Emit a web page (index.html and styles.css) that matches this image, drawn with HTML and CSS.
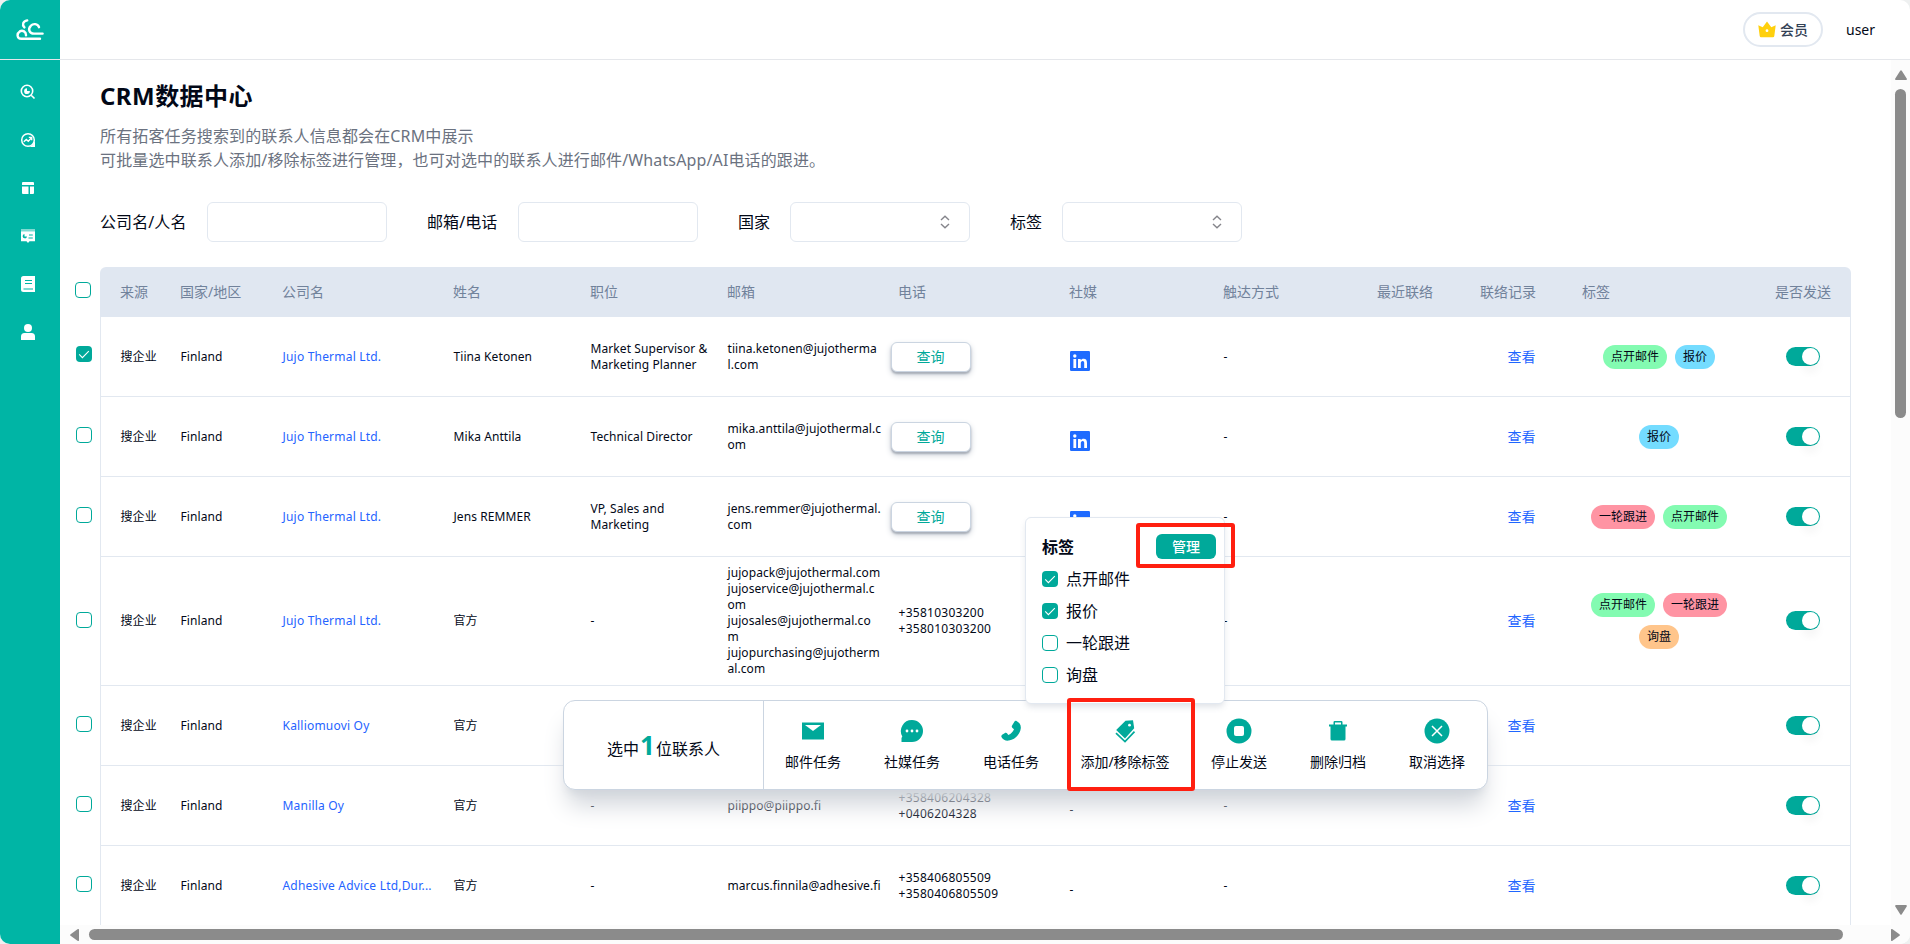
FILE: index.html
```html
<!DOCTYPE html>
<html lang="zh-CN">
<head>
<meta charset="utf-8">
<title>CRM数据中心</title>
<link rel="stylesheet" href="styles.css">
</head>
<body>
<svg class="sprite" aria-hidden="true">
  <symbol id="linkedin" viewBox="0 0 20 20"><rect width="20" height="20" rx="1.2" fill="#1f6bff"/><circle cx="4.8" cy="5" r="1.7" fill="#fff"/><path d="M3.4 8h2.8v9H3.4zM8 8h2.7v1.2c.6-.9 1.6-1.5 2.9-1.5 2.5 0 3.4 1.6 3.4 4.2V17h-2.800v-4.6c0-1.4-.3-2.3-1.5-2.3-1.3 0-1.9.9-1.9 2.3V17H8z" fill="#fff"/></symbol>
  <symbol id="updown" viewBox="0 0 12 14"><path d="M2 5l4-3.8L10 5M2 9l4 3.800L10 9" fill="none" stroke="#85858b" stroke-width="1.4"/></symbol>
  <symbol id="tick" viewBox="0 0 16 16"><path d="M3.2 8.4l3.2 3.2 6.4-6.4" fill="none" stroke="#fff" stroke-width="1.1"/></symbol>
</svg>
<div class="app">
  <aside class="sidebar">
    <div class="logo"><svg width="28" height="22" viewBox="0 0 28 22" fill="none" stroke="#fff" stroke-width="2.4" stroke-linecap="round"><path d="M11.200 1.400C7 2 5.800 5.600 8.400 8.400"/><path d="M23 8.200C21.800 4.600 17.200 4.200 14.800 6.800 11.400 10.200 13.600 14.600 18 14.600H26.600"/><path d="M10 16.400C10.200 12.600 6.600 10.800 3.800 12.400 .4 14.600 1 19.800 5.200 19.800H24"/></svg></div>
    <nav class="menu">
      <a class="menu-item"><svg width="16" height="16" viewBox="0 0 16 16" fill="none" stroke="#fff" stroke-width="1.6"><circle cx="7" cy="7" r="5.700"/><path d="M11.200 11.200l3.300 3.300"/><path d="M7 4.500v2.500h2.900A2.900 2.900 0 1 1 7 4.200z" fill="#fff" stroke="none"/></svg></a>
      <a class="menu-item"><svg width="16" height="16" viewBox="0 0 16 16" fill="none" stroke="#fff" stroke-width="1.500"><circle cx="8" cy="8" r="6.300"/><path d="M15 8v7H8c4 0 6-3 7-7z" fill="#fff" stroke="none"/><path d="M3.800 9.800l2.500-2.300 2 1.800 3-3.200M8.800 5.400h2.900v2.900" stroke-width="1.400"/></svg></a>
      <a class="menu-item"><svg width="16" height="16" viewBox="0 0 16 16" fill="#fff"><path d="M3 2h10a1 1 0 0 1 1 1v2H2V3a1 1 0 0 1 1-1zM2 6.500h6.500V14H3a1 1 0 0 1-1-1zM10 6.500h4V13a1 1 0 0 1-1 1h-3z"/></svg></a>
      <a class="menu-item"><svg width="16" height="16" viewBox="0 0 16 16"><path d="M1 1.500h14v1H1zM1 3.300h14v10H9.500L8 15l-1.500-1.700H1z" fill="#fff"/><path d="M4.500 6a2.200 2.200 0 1 0 2.500 2.500H4.500z" fill="#00b5a5"/><path d="M9 7h3.800M8.500 10h4.300" fill="none" stroke="#00b5a5" stroke-width="1"/></svg></a>
      <a class="menu-item"><svg width="16" height="18" viewBox="0 0 16 18"><path d="M3.500 1H15v16H3.500A2.500 2.500 0 0 1 1 14.500v-11A2.500 2.500 0 0 1 3.500 1z" fill="#fff"/><path d="M5 5.500h7M5 8.500h7M3.500 14h9.500" stroke="#00b5a5" stroke-width="1.200"/></svg></a>
      <a class="menu-item"><svg width="16" height="18" viewBox="0 0 16 18" fill="#fff"><circle cx="8" cy="5" r="4"/><path d="M1 17v-3.500A3.500 3.500 0 0 1 4.500 10h7a3.500 3.500 0 0 1 3.500 3.500V17z"/></svg></a>
    </nav>
  </aside>
  <div class="body">
    <header class="topbar">
      <div class="vip"><svg width="18" height="17" viewBox="0 0 18 17"><path d="M.3 4.300l4.400 2L9 .4l4.300 5.900 4.400-2L16.300 15a1.400 1.400 0 0 1-1.400 1.300H3.100A1.400 1.400 0 0 1 1.700 15z" fill="#ffd00d"/><circle cx="9" cy="9.700" r="1.400" fill="#fff"/></svg><span>会员</span></div>
      <span class="user">user</span>
    </header>
    <div class="scroller">
      <main class="content">
        <div class="intro">
          <h1>CRM数据中心</h1>
          <p>所有拓客任务搜索到的联系人信息都会在CRM中展示</p>
          <p>可批量选中联系人添加/移除标签进行管理，也可对选中的联系人进行邮件/WhatsApp/AI电话的跟进。</p>
        </div>
        <form class="filters">
          <label class="filter"><span class="w-87">公司名/人名</span><i class="input"></i></label>
          <label class="filter"><span class="w-71">邮箱/电话</span><i class="input"></i></label>
          <label class="filter"><span>国家</span><i class="input"><svg width="12" height="14"><use href="#updown"/></svg></i></label>
          <label class="filter"><span>标签</span><i class="input"><svg width="12" height="14"><use href="#updown"/></svg></i></label>
        </form>
        <div class="line">
          <div class="gutter gutter-head"><i class="check"></i></div>
          <div class="cols head"><div>来源</div><div>国家/地区</div><div>公司名</div><div>姓名</div><div>职位</div><div>邮箱</div><div>电话</div><div>社媒</div><div>触达方式</div><div>最近联络</div><div>联络记录</div><div>标签</div><div>是否发送</div></div>
        </div>
        <div class="line">
          <div class="gutter raised"><i class="check on"><svg width="16" height="16"><use href="#tick"/></svg></i></div>
          <div class="cols row"><div>搜企业</div><div>Finland</div><div class="link">Jujo Thermal Ltd.</div><div>Tiina Ketonen</div><div>Market Supervisor &amp;<br>Marketing Planner</div><div class="mail">tiina.ketonen@jujotherma<br>l.com</div><div><button class="query">查询</button></div><div><svg class="in" width="20" height="20"><use href="#linkedin"/></svg></div><div>-</div><div></div><div class="view">查看</div><div class="tags"><span class="tag green">点开邮件</span><span class="tag blue">报价</span></div><div><i class="switch"></i></div></div>
        </div>
        <div class="line">
          <div class="gutter"><i class="check"></i></div>
          <div class="cols row"><div>搜企业</div><div>Finland</div><div class="link">Jujo Thermal Ltd.</div><div>Mika Anttila</div><div>Technical Director</div><div class="mail">mika.anttila@jujothermal.c<br>om</div><div><button class="query">查询</button></div><div><svg class="in" width="20" height="20"><use href="#linkedin"/></svg></div><div>-</div><div></div><div class="view">查看</div><div class="tags"><span class="tag blue">报价</span></div><div><i class="switch"></i></div></div>
        </div>
        <div class="line">
          <div class="gutter"><i class="check"></i></div>
          <div class="cols row"><div>搜企业</div><div>Finland</div><div class="link">Jujo Thermal Ltd.</div><div>Jens REMMER</div><div>VP, Sales and<br>Marketing</div><div class="mail">jens.remmer@jujothermal.<br>com</div><div><button class="query">查询</button></div><div><svg class="in" width="20" height="20"><use href="#linkedin"/></svg></div><div>-</div><div></div><div class="view">查看</div><div class="tags"><span class="tag red">一轮跟进</span><span class="tag green">点开邮件</span></div><div><i class="switch"></i></div></div>
        </div>
        <div class="line">
          <div class="gutter"><i class="check"></i></div>
          <div class="cols row tall"><div>搜企业</div><div>Finland</div><div class="link">Jujo Thermal Ltd.</div><div>官方</div><div>-</div><div class="mail">jujopack@jujothermal.com<br>jujoservice@jujothermal.c<br>om<br>jujosales@jujothermal.co<br>m<br>jujopurchasing@jujotherm<br>al.com</div><div class="phone">+35810303200<br>+358010303200</div><div></div><div>-</div><div></div><div class="view">查看</div><div class="tags"><span class="tag green">点开邮件</span><span class="tag red">一轮跟进</span><span class="tag orange">询盘</span></div><div><i class="switch"></i></div></div>
        </div>
        <div class="line">
          <div class="gutter"><i class="check"></i></div>
          <div class="cols row"><div>搜企业</div><div>Finland</div><div class="link">Kalliomuovi Oy</div><div>官方</div><div></div><div></div><div></div><div></div><div></div><div></div><div class="view">查看</div><div></div><div><i class="switch"></i></div></div>
        </div>
        <div class="line">
          <div class="gutter"><i class="check"></i></div>
          <div class="cols row"><div>搜企业</div><div>Finland</div><div class="link">Manilla Oy</div><div>官方</div><div>-</div><div class="mail">piippo@piippo.fi</div><div class="phone">+358406204328<br>+0406204328</div><div class="low">-</div><div>-</div><div></div><div class="view">查看</div><div></div><div><i class="switch"></i></div></div>
        </div>
        <div class="line">
          <div class="gutter"><i class="check"></i></div>
          <div class="cols row"><div>搜企业</div><div>Finland</div><div class="link">Adhesive Advice Ltd,Dur...</div><div>官方</div><div>-</div><div class="mail">marcus.finnila@adhesive.fi</div><div class="phone">+358406805509<br>+3580406805509</div><div class="low">-</div><div>-</div><div></div><div class="view">查看</div><div></div><div><i class="switch"></i></div></div>
        </div>
      </main>
      <div class="vbar"><svg width="12" height="10" viewBox="0 0 12 10"><path d="M5.200.7a1 1 0 0 1 1.600 0l4.900 7.700a1 1 0 0 1-.8 1.600H1.100a1 1 0 0 1-.8-1.600z"/></svg><i class="vthumb"></i><svg class="down" width="12" height="10" viewBox="0 0 12 10"><path d="M5.200 9.300a1 1 0 0 0 1.600 0l4.900-7.700A1 1 0 0 0 10.900 0H1.100a1 1 0 0 0-.8 1.600z"/></svg></div>
      <div class="hbar"><svg width="9" height="12" viewBox="0 0 9 12"><path d="M.6 5.200a1 1 0 0 0 0 1.600l6.900 5A1 1 0 0 0 9 11V1A1 1 0 0 0 7.500.2z"/></svg><i class="hthumb"></i><svg class="right" width="9" height="12" viewBox="0 0 9 12"><path d="M8.400 5.200a1 1 0 0 1 0 1.600l-6.900 5A1 1 0 0 1 0 11V1A1 1 0 0 1 1.500.2z"/></svg></div>
    </div>
  </div>

  <section class="actions">
    <div class="picked">选中<b>1</b>位联系人</div>
    <div class="action"><svg width="26" height="26" viewBox="0 0 26 26"><path d="M2 4.500h22v17H2z"/><path d="M5 7h16l-8 6z" fill="#fff"/></svg><span>邮件任务</span></div>
    <div class="action"><svg width="26" height="26" viewBox="0 0 26 26"><path d="M13 2a11 11 0 1 1 0 22H2.500V20l.8-1.600A11 11 0 0 1 13 2z"/><circle cx="8" cy="13" r="1.400" fill="#fff"/><circle cx="13" cy="13" r="1.400" fill="#fff"/><circle cx="18" cy="13" r="1.400" fill="#fff"/></svg><span>社媒任务</span></div>
    <div class="action"><svg width="26" height="26" viewBox="0 0 26 26"><path d="M18.500 3c2.800 1.400 4.600 3.800 4.300 7.200-.6 5.800-5.600 11.300-11.900 12.400-3.200.5-5.800-.8-7.300-3.400-.5-.9-.3-1.800.5-2.400l2.500-1.600c1-.7 2.200-.4 2.800.5l.9 1.300c2.900-1.200 4.700-3.200 5.700-5.700l-1.500-1.200c-.8-.7-1-1.800-.4-2.700L16.200 4c.6-1 1.400-1.400 2.300-1z"/></svg><span>电话任务</span></div>
    <div class="action wide"><svg width="26" height="26" viewBox="0 0 26 26"><path d="M13.500 2.800 21 2.200l1.200 8-9.200 10.300-8.800-8.600z"/><circle cx="17.500" cy="7.200" r="1.400" fill="#fff"/><path d="M4 15.200l9 8.400 9.500-10" fill="none" stroke="#00a99a" stroke-width="1.700"/></svg><span>添加/移除标签</span></div>
    <div class="action"><svg width="26" height="26" viewBox="0 0 26 26"><circle cx="13" cy="13" r="12.500"/><rect x="8" y="8" width="10" height="10" rx="2" fill="#fff"/></svg><span>停止发送</span></div>
    <div class="action"><svg width="26" height="26" viewBox="0 0 26 26"><path d="M4 6.500h4.500V4.200A1.200 1.200 0 0 1 9.700 3h6.600a1.200 1.200 0 0 1 1.200 1.200v2.300H22v2h-1.500V21a1.500 1.500 0 0 1-1.500 1.500H7A1.500 1.500 0 0 1 5.500 21V8.500H4zM10 4.600v1.900h6V4.600z" fill-rule="evenodd"/></svg><span>删除归档</span></div>
    <div class="action"><svg width="26" height="26" viewBox="0 0 26 26"><circle cx="13" cy="13" r="12.500"/><path d="M8 8l10 10M18 8L8 18" stroke="#fff" stroke-width="1.500"/></svg><span>取消选择</span></div>
  </section>

  <section class="popover">
    <div class="pop-head"><strong>标签</strong><button class="manage">管理</button></div>
    <label class="option"><i class="check on"><svg width="16" height="16"><use href="#tick"/></svg></i>点开邮件</label>
    <label class="option"><i class="check on"><svg width="16" height="16"><use href="#tick"/></svg></i>报价</label>
    <label class="option"><i class="check"></i>一轮跟进</label>
    <label class="option"><i class="check"></i>询盘</label>
  </section>
  <div class="mark mark-manage"></div>
  <div class="mark mark-tags"></div>
</div>
</body>
</html>
```

FILE: styles.css
```css
* { box-sizing: border-box; }
body {
  margin: 0;
  background: #eef0f0;
  font-family: "Noto Sans", "Noto Sans CJK SC", sans-serif;
  color: #020817;
}
h1, p { margin: 0; }
i { font-style: normal; }
svg { display: block; flex: none; }
button { font-family: inherit; padding: 0; }
.sprite { position: absolute; width: 0; height: 0; }

.app {
  position: relative;
  display: flex;
  width: 1910px;
  height: 944px;
  overflow: hidden;
  border-radius: 10px;
  background: #fff;
}

/* Sidebar */
.sidebar { width: 60px; flex: none; background: #00b5a5; }
.logo { height: 60px; padding: 19px 0 0 16px; border-bottom: 1px solid #e5e7eb; }
.menu { padding-top: 8px; }
.menu-item { display: flex; align-items: center; justify-content: center; width: 56px; height: 48px; }

/* Header */
.body { display: flex; flex-direction: column; width: 1850px; height: 944px; }
.topbar {
  display: flex;
  align-items: center;
  justify-content: flex-end;
  flex: none;
  gap: 24px;
  height: 60px;
  padding-right: 35px;
  border-bottom: 1px solid #e5e7eb;
}
.vip {
  display: flex;
  align-items: center;
  gap: 5px;
  width: 80px;
  height: 35px;
  padding-left: 13px;
  border: 2px solid #e2e8f0;
  border-radius: 18px;
  font-size: 14px;
  font-weight: 500;
  color: #334155;
}
.vip span { margin-left: -1px; padding-bottom: 2px; }
.user { width: 29px; margin-left: -1px; font-size: 14px; white-space: nowrap; }

/* Scroll area */
.scroller {
  display: grid;
  grid-template: 865px 19px / 1831px 19px;
}
.content { overflow: hidden; }
.vbar, .hbar { display: flex; background: #fcfcfc; fill: #8b8b8b; }
.vbar { flex-direction: column; padding: 10px 0 10px 4px; }
.vthumb { width: 11px; height: 329px; margin-top: 9px; border-radius: 6px; background: #8b8b8b; }
.vbar .down { margin-top: auto; }
.hbar { grid-column: 1 / 3; padding: 4px 10px 0 10px; }
.hthumb { width: 1754px; height: 11px; margin-left: 10px; border-radius: 6px; background: #8b8b8b; }
.hbar .right { margin-left: auto; }

.intro { padding: 20px 0 0 40px; color: #6b7280; font-size: 16px; line-height: 24px; letter-spacing: .13px; white-space: nowrap; }
.intro h1 { margin-bottom: 12px; font-size: 24px; line-height: 32px; font-weight: 700; letter-spacing: .45px; color: #020817; }
.filters { display: flex; gap: 40px; padding: 30px 0 25px 40px; }
.filter { display: flex; align-items: center; gap: 20px; font-size: 16px; line-height: 24px; letter-spacing: .1px; white-space: nowrap; }
.filter span { width: 32px; }
.filter .w-87 { width: 87px; }
.filter .w-71 { width: 71px; }
.input {
  display: flex;
  align-items: center;
  justify-content: flex-end;
  width: 180px;
  height: 40px;
  padding-right: 18px;
  border: 1px solid #e2e8f0;
  border-radius: 6px;
}

/* Table */
.line { display: flex; }
.gutter { display: flex; align-items: center; width: 40px; padding: 0 0 4px 16px; }
.gutter.raised { padding-bottom: 6px; }
.gutter-head { padding: 0 0 4px 15px; }
.check { display: block; flex: none; width: 16px; height: 16px; border: 1px solid #00a99a; border-radius: 4px; }
.check.on { border: 0; background: #00a99a; }
.cols {
  display: grid;
  grid-template-columns: 60px 102px 171px 137px 137px 171px 171px 154px 154px 103px 102px 193px 1fr;
  align-items: center;
  width: 1751px;
  padding-left: 20px;
  white-space: nowrap;
}
.head { height: 50px; padding-bottom: 2px; border-radius: 6px 6px 0 0; background: #e0e7f1; color: #71829b; font-size: 14px; }
.row {
  height: 80px;
  padding-left: 19.5px;
  border: solid #e2e8f0;
  border-width: 0 1px 1px;
  font-size: 12px;
  line-height: 16px;
  letter-spacing: .08px;
}
.row.tall { height: 129px; }
.link { color: #2563ff; letter-spacing: .2px; }
.phone { letter-spacing: .27px; }
.view { padding-left: 27px; font-size: 14px; letter-spacing: 0; color: #1f66ff; }
.low { padding-top: 8px; }
.in { margin-top: 8px; }
.query {
  width: 80px;
  height: 30px;
  margin-left: -8px;
  padding-bottom: 2px;
  border: 1px solid #cbd5e1;
  border-radius: 6px;
  background: #fff;
  box-shadow: 0 2px 2px #a9afb9, 0 3px 6px #cbd0d8;
  color: #00a99a;
  font-size: 14px;
}
.tags { display: flex; flex-wrap: wrap; justify-content: center; gap: 8px; width: 153px; letter-spacing: 0; }
.tag { height: 24px; padding: 0 8px; border-radius: 12px; line-height: 24px; }
.green { background: #83fbb1; }
.blue { background: #74dcff; }
.red { background: #ff94a3; }
.orange { background: #ffc58b; }
.switch {
  display: flex;
  justify-content: flex-end;
  width: 34px;
  height: 19px;
  margin: 0 0 1px 10px;
  padding: 1px;
  border-radius: 10px;
  background: #00a99a;
}
.switch::after { content: ""; width: 17px; height: 17px; border-radius: 50%; background: #fff; box-shadow: 0 8px 8px rgba(0, 0, 0, .04); }

/* Floating action bar */
.actions {
  position: absolute;
  left: 563px;
  top: 700px;
  display: flex;
  width: 925px;
  height: 90px;
  border: 1px solid #cbd5e1;
  border-radius: 12px;
  background: #fff;
  box-shadow: 0 20px 25px -5px #d1d5db, 0 8px 10px -6px #d1d5db;
  white-space: nowrap;
}
.picked {
  display: flex;
  align-items: baseline;
  justify-content: center;
  flex: none;
  width: 200px;
  padding-top: 26px;
  border-right: 1px solid #cbd5e1;
  font-size: 16px;
}
.picked b { padding: 0 1px; font-size: 26px; line-height: 36px; color: #00a99a; }
.action { display: flex; flex-direction: column; align-items: center; flex: none; gap: 8px; width: 99px; padding: 17px 1px 0 0; font-size: 14px; line-height: 20px; fill: #00a99a; }
.action.wide { width: 129px; }

/* Tag popover */
.popover {
  position: absolute;
  left: 1025px;
  top: 517px;
  width: 200px;
  height: 187px;
  padding: 16px 8px 0 16px;
  border: 1px solid #e2e8f0;
  border-radius: 6px;
  background: #fff;
  box-shadow: 0 4px 6px -1px rgba(100, 116, 139, .2);
  font-size: 16px;
}
.pop-head { display: flex; align-items: center; justify-content: space-between; height: 25px; margin-bottom: 4px; }
.pop-head strong { padding-bottom: 2px; }
.manage { width: 60px; height: 25px; padding-bottom: 1px; border: 0; border-radius: 6px; background: #00a99a; color: #fff; font-size: 14px; font-weight: 500; }
.option { display: flex; align-items: center; gap: 8px; height: 32px; line-height: 24px; }

/* Highlight frames */
.mark { position: absolute; border: 4px solid #ff1f10; border-radius: 3px; }
.mark-manage { left: 1136px; top: 523px; width: 99px; height: 45px; }
.mark-tags { left: 1067px; top: 698px; width: 128px; height: 93px; }
```
